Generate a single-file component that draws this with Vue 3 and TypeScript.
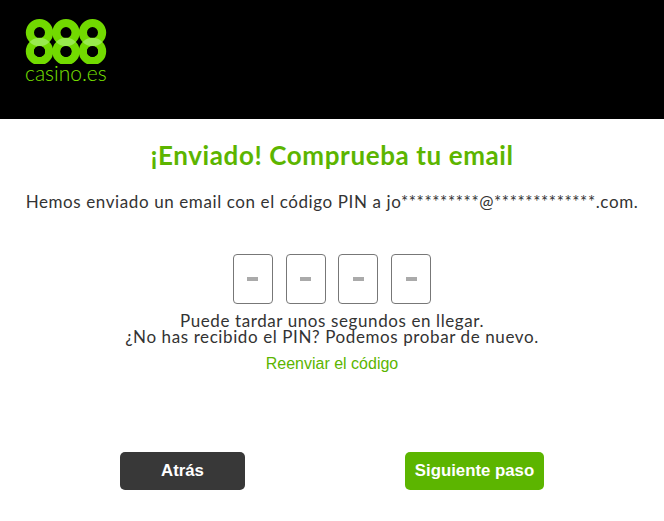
<script setup lang="ts">
const pins: number[] = [1, 2, 3, 4]
const cols: number[] = [39.5, 66, 92.5]
</script>

<template>
  <div class="page">
    <header class="top">
      <div class="logo">
        <svg class="mark" width="82" height="46" viewBox="25 18 82 46" aria-hidden="true">
          <defs>
            <clipPath v-for="c in cols" :id="`low${c * 10}`" :key="c">
              <circle :cx="c" cy="51.4" r="13.7" />
            </clipPath>
          </defs>
          <g fill="none" stroke="#72da00" stroke-width="8.2">
            <template v-for="c in cols" :key="c">
              <circle :cx="c" cy="32.6" r="9.6" />
              <circle :cx="c" cy="51.4" r="9.6" />
            </template>
          </g>
          <template v-for="c in cols" :key="c">
            <g :clip-path="`url(#low${c * 10})`">
              <circle :cx="c" cy="32.6" r="9.6" fill="none" stroke="#98ea4e" stroke-width="8.2" />
            </g>
            <circle :cx="c" cy="51.4" r="5.5" fill="#000" />
          </template>
        </svg>
        <span class="brand">casino.es</span>
      </div>
    </header>
    <main class="body">
      <h1 class="title">¡Enviado! Comprueba tu email</h1>
      <p class="lead">Hemos enviado un email con el código PIN a jo**********@*************.com.</p>
      <div class="pins">
        <div v-for="p in pins" :key="p" class="pin"><span class="dash"></span></div>
      </div>
      <p class="hint">Puede tardar unos segundos en llegar.<br />¿No has recibido el PIN? Podemos probar de nuevo.</p>
      <a class="resend">Reenviar el código</a>
      <div class="actions">
        <button class="btn back">Atrás</button>
        <button class="btn next">Siguiente paso</button>
      </div>
    </main>
  </div>
</template>

<style>
html, body { margin: 0; background: #fff; }
</style>

<style scoped>
.page { width: 664px; height: 521px; overflow: hidden; background: #fff; }
.top { height: 119px; background: #000; padding: 18px 0 0 25px; box-sizing: border-box; }
.logo { display: flex; flex-direction: column; width: 84px; }
.mark { display: block; }
.brand { font-family: "Lato", sans-serif; font-weight: 300; font-size: 21px; line-height: 18px; color: #78e000; margin-top: 0; white-space: nowrap; }
.body { display: flex; flex-direction: column; align-items: center; }
.title { margin: 20px 0 0; font-family: "Lato", sans-serif; font-weight: 700; font-size: 26px; line-height: 32px; color: #5cb500; letter-spacing: .6px; }
.lead { margin: 21px 0 0; font-family: "Lato", sans-serif; font-size: 17px; line-height: 20px; color: #333; letter-spacing: .6px; white-space: nowrap; }
.pins { display: flex; gap: 12.7px; margin-top: 42px; }
.pin { width: 38px; height: 48px; border: 1px solid #777; border-radius: 4px; display: flex; align-items: center; justify-content: center; background: #fff; }
.dash { width: 11px; height: 4px; background: #aaa; }
.hint { margin: 9px 0 0; font-family: "Lato", sans-serif; font-size: 17px; line-height: 16px; color: #333; letter-spacing: .6px; text-align: center; }
.resend { margin-top: 9px; font-family: "Liberation Sans", sans-serif; font-size: 16px; line-height: 20px; color: #5cb500; }
.actions { align-self: stretch; display: flex; justify-content: space-between; padding: 0 120px; margin-top: 78px; }
.btn { height: 38px; border: 0; border-radius: 5px; color: #fff; font-family: "Liberation Sans", sans-serif; font-size: 16.8px; font-weight: 700; padding: 0; }
.back { width: 125px; background: #383838; }
.next { width: 139px; background: #5cb500; }
</style>
